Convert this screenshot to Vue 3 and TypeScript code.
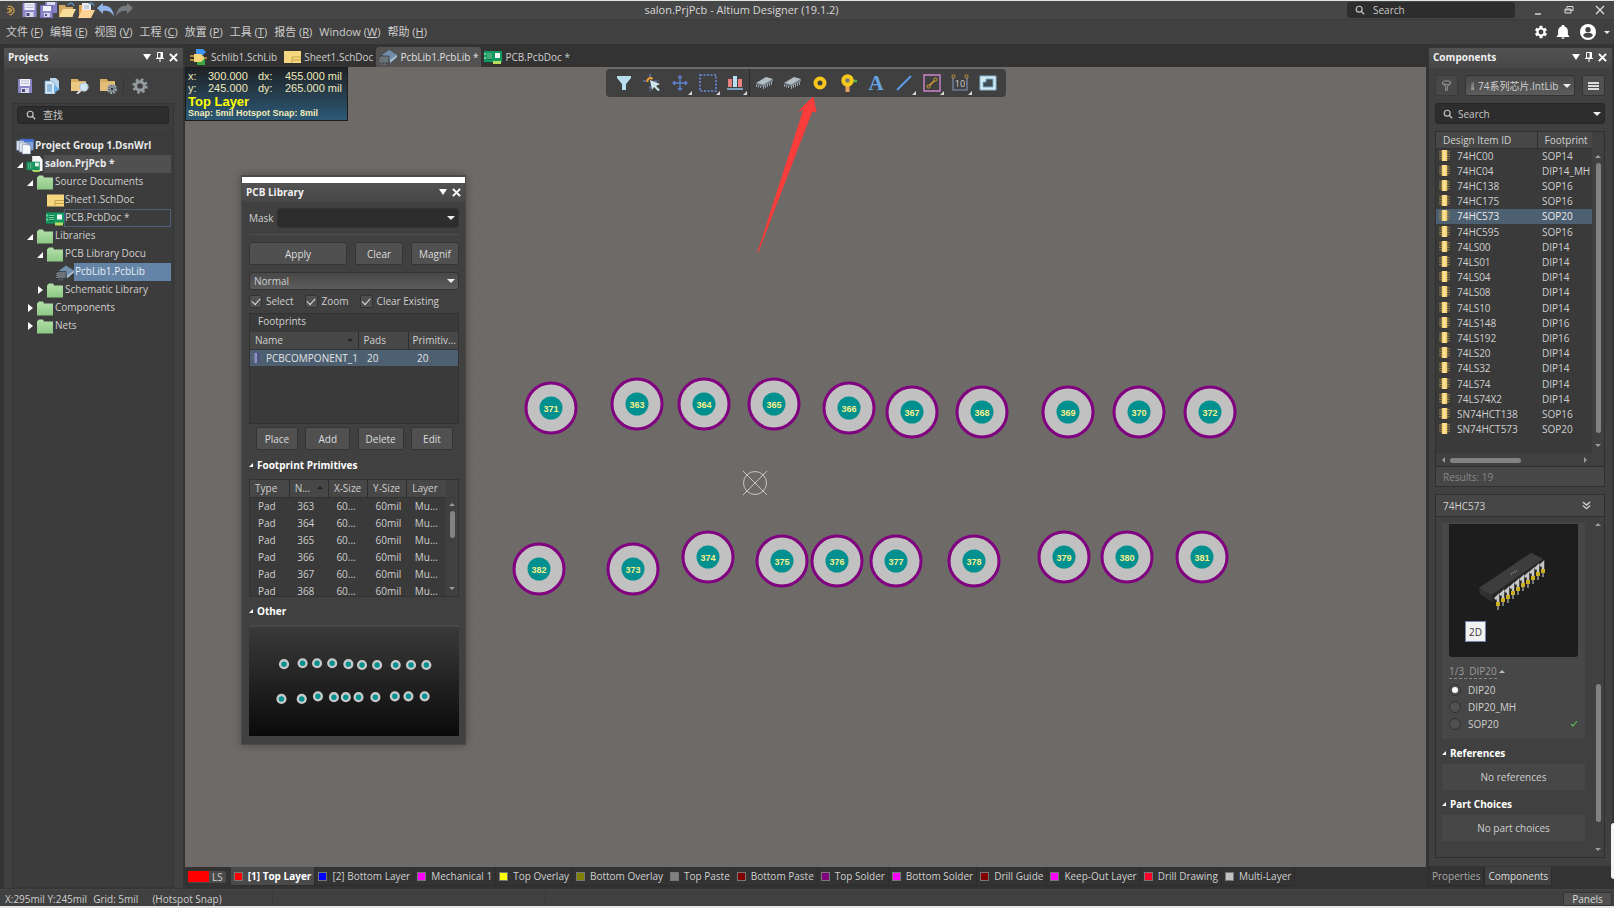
<script setup lang="ts">
import { ref } from 'vue'

interface Pad { id: number; x: number; y: number }
interface TreeNode { label: string; level: number; icon: string; arrow?: 'open' | 'closed'; state?: string }
interface Layer { name: string; color: string }
interface Part { id: string; footprint: string }

const menus: [string, string][] = [
  ['文件', 'F'], ['编辑', 'E'], ['视图', 'V'], ['工程', 'C'], ['放置', 'P'],
  ['工具', 'T'], ['报告', 'R'], ['Window', 'W'], ['帮助', 'H'],
]

const quickIcons = ['save', 'save-all', 'open', 'open-doc', 'undo', 'redo']

const tree: TreeNode[] = [
  { label: 'Project Group 1.DsnWrl', level: 0, icon: 'group', state: 'strong' },
  { label: 'salon.PrjPcb *', level: 1, icon: 'project', arrow: 'open', state: 'strong current' },
  { label: 'Source Documents', level: 2, icon: 'folder', arrow: 'open' },
  { label: 'Sheet1.SchDoc', level: 3, icon: 'sheet' },
  { label: 'PCB.PcbDoc *', level: 3, icon: 'pcb', state: 'outlined' },
  { label: 'Libraries', level: 2, icon: 'folder', arrow: 'open' },
  { label: 'PCB Library Docu', level: 3, icon: 'folder', arrow: 'open' },
  { label: 'PcbLib1.PcbLib', level: 4, icon: 'pcblib', state: 'selected' },
  { label: 'Schematic Library', level: 3, icon: 'folder', arrow: 'closed' },
  { label: 'Components', level: 2, icon: 'folder', arrow: 'closed' },
  { label: 'Nets', level: 2, icon: 'folder', arrow: 'closed' },
]

const docs = [
  { name: 'Schlib1.SchLib', icon: 'schlib' },
  { name: 'Sheet1.SchDoc', icon: 'sheet' },
  { name: 'PcbLib1.PcbLib *', icon: 'pcblib', active: true },
  { name: 'PCB.PcbDoc *', icon: 'pcb' },
]

const tools = [
  { icon: 'funnel', more: false }, { icon: 'snap', more: false }, { icon: 'move', more: true },
  { icon: 'marquee', more: true }, { icon: 'align', more: true }, { icon: 'chip', more: false },
  { icon: 'chip', more: false }, { icon: 'pad', more: false }, { icon: 'via', more: false },
  { icon: 'letter', more: false }, { icon: 'line', more: true }, { icon: 'region', more: true },
  { icon: 'dimension', more: true }, { icon: 'board', more: false },
]

const pads: Pad[] = [
  { id: 371, x: 551, y: 408 }, { id: 363, x: 637, y: 404 }, { id: 364, x: 704, y: 404 },
  { id: 365, x: 774, y: 404 }, { id: 366, x: 849, y: 408 }, { id: 367, x: 912, y: 412 },
  { id: 368, x: 982, y: 412 }, { id: 369, x: 1068, y: 412 }, { id: 370, x: 1139, y: 412 },
  { id: 372, x: 1210, y: 412 }, { id: 382, x: 539, y: 569 }, { id: 373, x: 633, y: 569 },
  { id: 374, x: 708, y: 557 }, { id: 375, x: 782, y: 561 }, { id: 376, x: 837, y: 561 },
  { id: 377, x: 896, y: 561 }, { id: 378, x: 974, y: 561 }, { id: 379, x: 1064, y: 557 },
  { id: 380, x: 1127, y: 557 }, { id: 381, x: 1202, y: 557 },
]

const primitives = [363, 364, 365, 366, 367, 368]

const parts: Part[] = [
  ['74HC00', 'SOP14'], ['74HC04', 'DIP14_MH'], ['74HC138', 'SOP16'], ['74HC175', 'SOP16'],
  ['74HC573', 'SOP20'], ['74HC595', 'SOP16'], ['74LS00', 'DIP14'], ['74LS01', 'DIP14'],
  ['74LS04', 'DIP14'], ['74LS08', 'DIP14'], ['74LS10', 'DIP14'], ['74LS148', 'DIP16'],
  ['74LS192', 'DIP16'], ['74LS20', 'DIP14'], ['74LS32', 'DIP14'], ['74LS74', 'DIP14'],
  ['74LS74X2', 'DIP14'], ['SN74HCT138', 'SOP16'], ['SN74HCT573', 'SOP20'],
].map(([id, footprint]) => ({ id, footprint }))

const layers: Layer[] = [
  { name: '[1] Top Layer', color: '#ff0000' }, { name: '[2] Bottom Layer', color: '#0000ff' },
  { name: 'Mechanical 1', color: '#ff00ff' }, { name: 'Top Overlay', color: '#ffff00' },
  { name: 'Bottom Overlay', color: '#808000' }, { name: 'Top Paste', color: '#808080' },
  { name: 'Bottom Paste', color: '#800000' }, { name: 'Top Solder', color: '#800080' },
  { name: 'Bottom Solder', color: '#ff00ff' }, { name: 'Drill Guide', color: '#800000' },
  { name: 'Keep-Out Layer', color: '#ff00ff' }, { name: 'Drill Drawing', color: '#ff0028' },
  { name: 'Multi-Layer', color: '#c0c0c0' },
]

const models = ['DIP20', 'DIP20_MH', 'SOP20']
const selectedPart = ref('74HC573')
const model = ref('DIP20')
const activeLayer = ref('[1] Top Layer')
const mask = ref('')
const checks = ref([
  { label: 'Select', on: true }, { label: 'Zoom', on: true }, { label: 'Clear Existing', on: true },
])
const pins = Array.from({ length: 10 }, (_, i) => ({ x: 49 + i * 5, y: 76 - Math.round(i * 3.7) }))
</script>

<template>
  <div class="app">
    <svg class="defs" aria-hidden="true">
      <defs>
        <linearGradient id="g-folder" x1="0" y1="0" x2="0" y2="1"><stop offset="0" stop-color="#b5e0ab" /><stop offset="1" stop-color="#8cc884" /></linearGradient>
        <linearGradient id="g-chip" x1="0" y1="0" x2="1" y2="0"><stop offset="0" stop-color="#f0c860" /><stop offset=".5" stop-color="#ffe6a0" /><stop offset="1" stop-color="#eec25a" /></linearGradient>
        <symbol id="i-logo" viewBox="0 0 16 16"><path d="M4 2h5l4 4v4l-4 4H6M3 6l4-1 3 2-2 3-5 1M7 5v5" fill="none" stroke="#c69c4c" stroke-width="1.800" /></symbol>
        <symbol id="i-save" viewBox="0 0 16 16"><path d="M1 1h14v14H1z" fill="#8a86c8" /><path d="M3 1h10v7H3z" fill="#f2f2fa" /><path d="M4 3h8M4 5.500h8" stroke="#b8b8d0" /><path d="M4 10h8v5H4z" fill="#d8d8ea" /><path d="M5 11h3v3H5z" fill="#4b4880" /></symbol>
        <symbol id="i-save-all" viewBox="0 0 17 16"><path d="M5 0h12v11H5z" fill="#8480c4" /><path d="M7 0h8v3H7z" fill="#dcdcf0" /><path d="M0 3h13v13H0z" fill="#716cb4" /><path d="M1 4h11v11H1z" fill="#8a86c8" /><path d="M3 4h8v5H3z" fill="#f2f2fa" /><path d="M4 11h6v4H4z" fill="#d8d8ea" /><path d="M5 12h2v2H5z" fill="#4b4880" /></symbol>
        <symbol id="i-open" viewBox="0 0 17 16"><path d="M0 3h6l1 2h7v10H0z" fill="#d3ab62" /><path d="M4 7h13l-4 8H0z" fill="#f8dc9a" /><path d="M9 3c2-3 5-2 6 1" fill="none" stroke="#5b8fb0" stroke-width="1.500" /></symbol>
        <symbol id="i-open-doc" viewBox="0 0 17 16"><path d="M1 3h3v12H1z" fill="#e2a752" /><path d="M4 1h9v11H4z" fill="#e8ecf2" /><path d="M6 4h5M6 6h5" stroke="#a7b2c0" /><path d="M4 8h13l-4 8H0z" fill="#fbd294" /><path d="M11 2c2-2 4-1 5 2" fill="none" stroke="#5b8fb0" stroke-width="1.500" /></symbol>
        <symbol id="i-undo" viewBox="0 0 17 16"><path d="M0 6l6-5v3c6-1 10 3 11 10-3-5-7-6-11-5v3z" fill="#8fb4ea" /></symbol>
        <symbol id="i-redo" viewBox="0 0 17 16"><path d="M17 6l-6-5v3C5 3 1 7 0 14c3-5 7-6 11-5v3z" fill="#777c80" /></symbol>
        <symbol id="i-copy" viewBox="0 0 16 16"><path d="M6 0h6l3 3v9H6z" fill="#b9d5ea" /><path d="M1 3h7l3 3v10H1z" fill="#d9eaf6" stroke="#6e9cc0" stroke-width=".7" /><path d="M3 7h5M3 9h5M3 11h5M3 13h5" stroke="#4d8fc7" /><path d="M10 7l6 4-6 4z" fill="#6db1ea" /></symbol>
        <symbol id="i-find-folder" viewBox="0 0 18 16"><path d="M0 1h7l1 2h7v10H0z" fill="#d9ad62" /><path d="M0 4h15v9H0z" fill="#edc882" /><circle cx="13" cy="9" r="4.200" fill="#cfe7f5" stroke="#a9bccb" /><path d="M10 12l-4 4" stroke="#ddd" stroke-width="2" /></symbol>
        <symbol id="i-gear-folder" viewBox="0 0 18 16"><path d="M0 1h7l1 2h7v10H0z" fill="#d9ad62" /><path d="M0 4h15v9H0z" fill="#e3bd7a" /><circle cx="12" cy="11" r="4" fill="#444" stroke="#9aa5ad" stroke-width="2" stroke-dasharray="2 1" /><circle cx="12" cy="11" r="3" fill="#8a959c" /><circle cx="12" cy="11" r="1.300" fill="#333" /></symbol>
        <symbol id="i-gear" viewBox="0 0 16 16"><circle cx="8" cy="8" r="6.500" fill="none" stroke="currentColor" stroke-width="2.400" stroke-dasharray="2.600 2.500" /><circle cx="8" cy="8" r="4.300" fill="none" stroke="currentColor" stroke-width="3" /></symbol>
        <symbol id="i-cog" viewBox="3 2 20 20"><path d="M19.400 13a7 7 0 0 0 0-2l2.100-1.600-2-3.500-2.500 1a7 7 0 0 0-1.700-1L15 3.200h-4l-.4 2.700a7 7 0 0 0-1.700 1l-2.500-1-2 3.500L6.500 11a7 7 0 0 0 0 2l-2.100 1.600 2 3.500 2.500-1a7 7 0 0 0 1.700 1l.4 2.700h4l.4-2.700a7 7 0 0 0 1.700-1l2.500 1 2-3.500zM13 15.500a3.500 3.500 0 1 1 0-7 3.500 3.500 0 0 1 0 7z" fill="#fff" /></symbol>
        <symbol id="i-bell" viewBox="2 2 20 20"><path d="M12 22a2.500 2.500 0 0 0 2.500-2h-5A2.500 2.500 0 0 0 12 22zm7-6v-5c0-3.500-2-6-5-6.700V3.500a2 2 0 0 0-4 0v.8C7 5 5 7.500 5 11v5l-2 2v1h18v-1z" fill="#fff" /></symbol>
        <symbol id="i-user" viewBox="0 0 24 24"><circle cx="12" cy="12" r="12" fill="#fff" /><circle cx="12" cy="8.500" r="4" fill="#444" /><path d="M4.500 17c2-5 13-5 15 0-3 5-12 5-15 0z" fill="#444" /></symbol>
        <symbol id="i-search" viewBox="0 0 12 12"><circle cx="5" cy="5" r="3.500" fill="none" stroke="#c4c4c4" stroke-width="1.400" /><path d="M7.500 7.500l3.500 3.500" stroke="#c4c4c4" stroke-width="1.600" /></symbol>
        <symbol id="i-down" viewBox="0 0 8 8"><path d="M0 1h8L4 7z" fill="currentColor" /></symbol>
        <symbol id="i-pin" viewBox="0 0 8 10"><path d="M1.500.5h5V6h-5zM0 6.500h8M4 6.500V10" fill="none" stroke="#fff" /><path d="M4.500.5h2V6h-2z" fill="#fff" /></symbol>
        <symbol id="i-close" viewBox="0 0 10 10"><path d="M1 1l8 8M9 1L1 9" stroke="currentColor" stroke-width="2.200" /></symbol>
        <symbol id="i-thin-close" viewBox="0 0 10 10"><path d="M1 1l8 8M9 1L1 9" stroke="#ddd" stroke-width="1.300" /></symbol>
        <symbol id="i-restore" viewBox="0 0 10 10"><path d="M3 3V1.500h6v4H7M1 4h6v4H1zM1 5h6" fill="none" stroke="#ddd" /></symbol>
        <symbol id="i-minimize" viewBox="0 0 10 10"><path d="M2 9h6" stroke="#ddd" stroke-width="1.400" /></symbol>
        <symbol id="i-group" viewBox="0 0 18 18"><path d="M4 1h14v12H4z" fill="#7f9fd8" /><path d="M4 1h14v3H4z" fill="#3f6cd2" /><path d="M0 3h8v10H0z" fill="#d7e0ee" stroke="#6b7d9c" stroke-width=".6" /><path d="M3 5h8v10H3z" fill="#e3eaf4" stroke="#6b7d9c" stroke-width=".6" /><path d="M6 7h7l2 2v8H6z" fill="#f4f7fb" stroke="#6b7d9c" stroke-width=".6" /></symbol>
        <symbol id="i-project" viewBox="0 0 18 18"><path d="M6 0h8l3 4v12H6z" fill="#f4f6f8" /><path d="M0 6h14v9H0z" fill="#16935c" /><path d="M2 8h4v5H2z" fill="#7fdca8" /><path d="M3 8v5M5 8v5" stroke="#0d6e42" /><path d="M9 7h4v4H9z" fill="#e6f2ec" /><path d="M7 15h7v2H7z" fill="#a8d452" /></symbol>
        <symbol id="i-pcb" viewBox="0 0 18 16"><path d="M0 2h18v11H0z" fill="#129a62" /><path d="M3 4h5v7H3z" fill="#0c7548" /><path d="M3 5h5M3 7h5M3 9h5" stroke="#7fdca8" /><path d="M0 4h2v2H0zM0 8h2v2H0z" fill="#6cd29c" /><path d="M11 4h5v5h-5z" fill="#f0f4f2" /><path d="M9 12h8v3H9z" fill="#b8dc60" /></symbol>
        <symbol id="i-folder" viewBox="0 0 18 16"><path d="M1 3l2-2h4l1 2h9v12H1z" fill="url(#g-folder)" /></symbol>
        <symbol id="i-sheet" viewBox="0 0 18 16"><path d="M1 2h17v12H1z" fill="#f4d77e" /><path d="M9 8h9M9 11h9M9 8v6" stroke="#c39d47" stroke-width=".9" /></symbol>
        <symbol id="i-pcblib" viewBox="0 0 18 16"><path d="M3 6l7-5 8 5-7 6z" fill="#718fab" /><path d="M18 6v2l-7 6v-3z" fill="#a9bfd2" /><path d="M3 6l8 5v2L3 9z" fill="#4f6a82" /><path d="M1 7h9v7H1z" fill="#6a727a" stroke="#252a2e" stroke-width=".6" /><path d="M0 9h2M0 11h2M0 13h2M3 14v2M6 14v2" stroke="#7a8188" /></symbol>
        <symbol id="i-schlib" viewBox="0 0 18 16"><path d="M6 0h7l3 3-3 3H6z" fill="#3f93f2" /><path d="M7 10h8v6H7z" fill="#3aa945" /><path d="M4 5h7l4 4-4 4H4z" fill="#f5d777" /><path d="M0 7h4M0 11h4M15 9h2" stroke="#d9a735" stroke-width="1.500" /></symbol>
        <symbol id="i-funnel" viewBox="0 0 18 18"><path d="M2 2h14v2l-5 6v6H7v-6L2 4z" fill="#b9dfec" /></symbol>
        <symbol id="i-snap" viewBox="0 0 18 18"><path d="M7 0v5M7 12v5M0 7h4M11 7h5" stroke="#6f84cf" stroke-width="1.200" stroke-dasharray="3 1" /><path d="M4.500 8a3 3 0 0 1 5-3" fill="none" stroke="#efa52c" stroke-width="2" /><path d="M7 6l10 4-4 2 4 4-2 1-4-4-2 3z" fill="#cfe8f0" /></symbol>
        <symbol id="i-move" viewBox="0 0 18 18"><path d="M9 2v14M2 9h14M7 4l2-2 2 2M7 14l2 2 2-2M4 7L2 9l2 2M14 7l2 2-2 2" fill="none" stroke="#5f82cf" stroke-width="1.300" /></symbol>
        <symbol id="i-marquee" viewBox="0 0 18 18"><path d="M1 1h16v16H1z" fill="none" stroke="#6b8ae0" stroke-width="1.600" stroke-dasharray="2 1.500" /></symbol>
        <symbol id="i-align" viewBox="0 0 18 18"><path d="M2 5h4v8H2zM12 5h4v8h-4z" fill="#ea8080" /><path d="M7 2h4v11H7z" fill="#b9dff2" /><path d="M1 15h16" stroke="#8ec4ea" stroke-width="1.500" /></symbol>
        <symbol id="i-chip" viewBox="0 0 18 18"><path d="M1 9l10-6 7 2-10 6z" fill="#b4bec5" /><path d="M8 11l10-6v2L8 13z" fill="#7b868e" /><path d="M1 9l7 2v2l-7-2z" fill="#66727b" /><path d="M1.500 11v2M3.500 11.500v2M5.500 12v2M8.500 12v3M10.500 11v3M12.500 10v3M14.500 9v3M16.500 8v3" stroke="#b4bdc3" stroke-width=".8" /></symbol>
        <symbol id="i-pad" viewBox="0 0 18 18"><circle cx="9" cy="9" r="4.500" fill="none" stroke="#f6c81c" stroke-width="4" /></symbol>
        <symbol id="i-via" viewBox="0 0 18 18"><path d="M11 7h7" stroke="#51b54c" stroke-width="2.500" /><path d="M8.500 11v7" stroke="#e8a35e" stroke-width="4" /><circle cx="8.500" cy="6.500" r="4.200" fill="#777" stroke="#f6c81c" stroke-width="4" /></symbol>
        <symbol id="i-letter" viewBox="0 0 18 18"><text x="9" y="16" text-anchor="middle" font-family="Liberation Serif, serif" font-size="21" font-weight="700" fill="#68a4e4">A</text></symbol>
        <symbol id="i-line" viewBox="0 0 18 18"><path d="M2 16L16 2" stroke="#5b9ae6" stroke-width="2" /></symbol>
        <symbol id="i-region" viewBox="0 0 18 18"><path d="M1 1h16v16H1z" fill="none" stroke="#cc83cc" stroke-width="1.400" /><path d="M5 13l8-8" stroke="#d49a33" stroke-width="1.600" /><circle cx="5.500" cy="12.500" r="1.600" fill="#444" stroke="#d49a33" /><circle cx="12.500" cy="5.500" r="1.600" fill="#444" stroke="#d49a33" /></symbol>
        <symbol id="i-dimension" viewBox="0 0 18 18"><path d="M2 4v12h14V4" fill="none" stroke="#7a8fb8" stroke-width="1.200" /><circle cx="2.500" cy="2.500" r="1.600" fill="none" stroke="#d49a33" /><circle cx="15.500" cy="2.500" r="1.600" fill="none" stroke="#d49a33" /><text x="9" y="13" text-anchor="middle" font-family="Open Sans, sans-serif" font-size="9" fill="#d0d0d0">10</text></symbol>
        <symbol id="i-board" viewBox="0 0 18 18"><path d="M1 2h16v14H1z" fill="#d4ecf4" stroke="#86b4d0" /><path d="M4 13V8h3V5h7v8z" fill="#3f4a52" stroke="#7ba6c2" /></symbol>
        <symbol id="i-part" viewBox="0 0 12 12"><path d="M0 2h12M0 4.500h12M0 7h12M0 9.500h12" stroke="#9b834b" /><path d="M3 0h6v12H3z" fill="url(#g-chip)" /></symbol>
        <symbol id="i-foot" viewBox="0 0 12 12"><path d="M0 2h12M0 5h12M0 8h12" stroke="#6d7076" /><path d="M2 0h8v12H2z" fill="#4b527c" /><path d="M3 0h3v12H3z" fill="#8a93c4" /></symbol>
        <symbol id="i-funnel-line" viewBox="0 0 12 12"><ellipse cx="6" cy="3" rx="4.500" ry="2" fill="none" stroke="#8b8b8b" stroke-width="1.200" /><path d="M1.500 3.500L5 7v4h2V7l3.500-3.500" fill="none" stroke="#8b8b8b" stroke-width="1.200" /></symbol>
        <symbol id="i-chevrons" viewBox="0 0 10 10"><path d="M1 1l4 3.500L9 1M1 5l4 3.500L9 5" fill="none" stroke="#d0d0d0" stroke-width="1.500" /></symbol>
      </defs>
    </svg>

    <header class="titlebar">
      <div class="quick">
        <svg class="logo"><use href="#i-logo" /></svg>
        <button v-for="q in quickIcons" :key="q" type="button" :aria-label="q"><svg><use :href="'#i-' + q" /></svg></button>
      </div>
      <h1>salon.PrjPcb - Altium Designer (19.1.2)</h1>
      <div class="window-tools">
        <label class="field top-search"><svg><use href="#i-search" /></svg><input type="text" placeholder="Search" aria-label="Search"></label>
        <button type="button" aria-label="Minimize"><svg><use href="#i-minimize" /></svg></button>
        <button type="button" aria-label="Restore"><svg><use href="#i-restore" /></svg></button>
        <button type="button" aria-label="Close"><svg><use href="#i-thin-close" /></svg></button>
      </div>
    </header>
    <nav class="menubar">
      <button v-for="[name, key] in menus" :key="key" type="button">{{ name }} (<u>{{ key }}</u>)</button>
      <div class="account">
        <button type="button" aria-label="Settings"><svg><use href="#i-cog" /></svg></button>
        <button type="button" aria-label="Notifications"><svg><use href="#i-bell" /></svg></button>
        <button type="button" aria-label="Account" class="user"><svg><use href="#i-user" /></svg><i class="caret" /></button>
      </div>
    </nav>

    <main class="workspace">
      <aside class="dock projects">
        <div class="dock-head">
          <h2>Projects</h2>
          <button type="button" aria-label="Menu"><svg class="s8"><use href="#i-down" /></svg></button>
          <button type="button" aria-label="Pin"><svg class="pin"><use href="#i-pin" /></svg></button>
          <button type="button" aria-label="Close"><svg class="s9"><use href="#i-close" /></svg></button>
        </div>
        <div class="project-tools">
          <button type="button" aria-label="Save"><svg><use href="#i-save" /></svg></button>
          <button type="button" aria-label="Compile"><svg><use href="#i-copy" /></svg></button>
          <button type="button" aria-label="Explore"><svg class="wide"><use href="#i-find-folder" /></svg></button>
          <button type="button" aria-label="Project options"><svg class="wide"><use href="#i-gear-folder" /></svg></button>
          <button type="button" aria-label="Preferences" class="prefs"><svg><use href="#i-gear" /></svg></button>
        </div>
        <div class="tree-box">
          <label class="field find"><svg><use href="#i-search" /></svg><input type="text" placeholder="查找" aria-label="查找"></label>
          <ul class="tree">
            <li v-for="n in tree" :key="n.label" :style="{ paddingLeft: Math.max(0, n.level - 1) * 10 + 'px' }" :class="n.state">
              <i v-if="n.level" class="twist" :class="n.arrow" />
              <svg><use :href="'#i-' + n.icon" /></svg>
              <span class="node">{{ n.label }}</span>
            </li>
          </ul>
        </div>
      </aside>

      <section class="editor">
        <div class="doc-tabs">
          <button v-for="d in docs" :key="d.name" type="button" :class="{ active: d.active }"><svg><use :href="'#i-' + d.icon" /></svg>{{ d.name }}</button>
        </div>
        <div class="canvas">
          <svg class="drawing">
            <g transform="translate(-185 -67)">
              <g v-for="p in pads" :key="p.id">
                <circle :cx="p.x" :cy="p.y" r="25" fill="#c1c1c1" stroke="#800080" stroke-width="3" />
                <circle :cx="p.x" :cy="p.y" r="11.500" fill="#009090" />
                <text :x="p.x" :y="p.y + 4" class="pad-no">{{ p.id }}</text>
              </g>
              <g fill="none" stroke="#c4c4c4"><circle cx="755" cy="483" r="11.500" /><path d="M743 471l24 24M767 471l-24 24" /></g>
              <path d="M813 97l3 15-4-1-54 141 46-143-5 2z" fill="#fa3c3a" stroke="#fa3c3a" />
            </g>
          </svg>

          <div class="hud">
            <table>
              <tbody>
                <tr><td>x:</td><td>300.000</td><td>dx:</td><td>455.000 mil</td></tr>
                <tr><td>y:</td><td>245.000</td><td>dy:</td><td>265.000 mil</td></tr>
              </tbody>
            </table>
            <strong>Top Layer</strong>
            <small>Snap: 5mil Hotspot Snap: 8mil</small>
          </div>

          <div class="toolbar" role="toolbar">
            <button v-for="(t, i) in tools" :key="i" type="button" :aria-label="t.icon" :class="{ more: t.more, divided: i === 4 }"><svg><use :href="'#i-' + t.icon" /></svg></button>
          </div>

          <section class="library">
            <div class="grip" />
            <div class="dock-head">
              <h2>PCB Library</h2>
              <button type="button" aria-label="Menu"><svg class="s8"><use href="#i-down" /></svg></button>
              <button type="button" aria-label="Close"><svg class="s9"><use href="#i-close" /></svg></button>
            </div>
            <div class="lib-body">
              <div class="mask">
                <label for="mask">Mask</label>
                <span class="combo dark"><input id="mask" v-model="mask" type="text"></span>
              </div>
              <div class="actions">
                <button type="button" class="btn">Apply</button>
                <button type="button" class="btn">Clear</button>
                <button type="button" class="btn">Magnif</button>
              </div>
              <span class="combo mode"><select aria-label="Mode"><option>Normal</option></select></span>
              <div class="checks">
                <label v-for="c in checks" :key="c.label"><input v-model="c.on" type="checkbox">{{ c.label }}</label>
              </div>
              <div class="foot-box">
                <h3>Footprints</h3>
                <table class="foot">
                  <thead><tr><th class="sorted">Name</th><th>Pads</th><th>Primitiv...</th></tr></thead>
                  <tbody><tr><td><svg><use href="#i-foot" /></svg>PCBCOMPONENT_1</td><td>20</td><td>20</td></tr></tbody>
                </table>
              </div>
              <div class="foot-actions">
                <button type="button" class="btn">Place</button>
                <button type="button" class="btn">Add</button>
                <button type="button" class="btn">Delete</button>
                <button type="button" class="btn">Edit</button>
              </div>
              <h4><i class="twist open" />Footprint Primitives</h4>
              <div class="prim-box">
                <table class="prims">
                  <thead><tr><th>Type</th><th class="sorted">N...</th><th>X-Size</th><th>Y-Size</th><th>Layer</th></tr></thead>
                  <tbody><tr v-for="n in primitives" :key="n"><td>Pad</td><td>{{ n }}</td><td>60...</td><td>60mil</td><td>Mu...</td></tr></tbody>
                </table>
                <div class="vbar"><i class="up" /><b class="short" /><i class="down" /></div>
              </div>
              <h4><i class="twist open" />Other</h4>
              <svg class="preview" viewBox="0 0 210 109">
                <g transform="translate(-84 -51) scale(.216)">
                  <g v-for="p in pads" :key="p.id"><circle :cx="p.x" :cy="p.y" r="18" fill="#009090" stroke="#c8c8c8" stroke-width="11" /></g>
                </g>
              </svg>
            </div>
          </section>
        </div>
        <div class="layers">
          <button type="button" class="layer-set"><i />LS</button>
          <div class="layer-tabs">
            <button v-for="l in layers" :key="l.name" type="button" :class="{ active: l.name === activeLayer }" @click="activeLayer = l.name"><i :style="{ background: l.color }" />{{ l.name }}</button>
          </div>
        </div>
      </section>

      <div class="right">
        <aside class="dock components">
          <div class="dock-head">
            <h2>Components</h2>
            <button type="button" aria-label="Menu"><svg class="s8"><use href="#i-down" /></svg></button>
            <button type="button" aria-label="Pin"><svg class="pin"><use href="#i-pin" /></svg></button>
            <button type="button" aria-label="Close"><svg class="s9"><use href="#i-close" /></svg></button>
          </div>
          <div class="comp-body">
            <div class="source">
              <button type="button" class="btn flat" aria-label="Filter"><svg><use href="#i-funnel-line" /></svg></button>
              <span class="combo lib"><select aria-label="Library"><option>74系列芯片.IntLib</option></select></span>
              <button type="button" class="btn lines" aria-label="Options"><i /><i /><i /></button>
            </div>
            <label class="field comp-search combo"><svg><use href="#i-search" /></svg><input type="text" placeholder="Search" aria-label="Search components"></label>
            <div class="part-box">
              <div class="part-scroll">
                <table class="parts">
                  <thead><tr><th>Design Item ID</th><th>Footprint</th></tr></thead>
                  <tbody>
                    <tr v-for="p in parts" :key="p.id" :class="{ selected: p.id === selectedPart }" @click="selectedPart = p.id">
                      <td><svg><use href="#i-part" /></svg>{{ p.id }}</td><td>{{ p.footprint }}</td>
                    </tr>
                  </tbody>
                </table>
                <div class="vbar"><i class="up" /><b class="long" /><i class="down" /></div>
              </div>
              <div class="hbar"><i class="left" /><b /><i class="rightward" /></div>
              <p class="results">Results: 19</p>
            </div>
            <div class="detail">
              <div class="detail-head">{{ selectedPart }}<svg><use href="#i-chevrons" /></svg></div>
              <div class="detail-body">
                <div class="detail-main">
                  <div class="model-card">
                    <div class="model-view">
                      <svg viewBox="0 0 129 133">
                        <path d="M30 64l52-35 12 6v7L43 78l-12-8z" fill="#303030" />
                        <path d="M30 64l52-35 12 6-51 36z" fill="#3d3d3d" />
                        <path d="M43 71l51-36v7L43 78z" fill="#262626" />
                        <path d="M62 50l7-4" stroke="#888" stroke-width="1.500" stroke-dasharray="1 1" />
                        <g v-for="(p, i) in pins" :key="i">
                          <path :d="`M${p.x - 3} ${p.y - 1}l3-3v7`" fill="none" stroke="#c6c6c6" stroke-width="2.500" />
                          <path :d="`M${p.x} ${p.y + 2}v4`" stroke="#c9ae22" stroke-width="4" />
                          <path :d="`M${p.x} ${p.y + 6}v4`" stroke="#9a9a9a" stroke-width="1.500" />
                        </g>
                      </svg>
                      <button type="button">2D</button>
                    </div>
                    <a href="#" class="model-link">1/3&nbsp; DIP20</a>
                    <label v-for="m in models" :key="m" class="model"><input v-model="model" type="radio" name="model" :value="m">{{ m }}<svg v-if="m === 'SOP20'" viewBox="0 0 8 8"><path d="M1 4l2 2 4-5" fill="none" stroke="#5cb85c" stroke-width="1.200" /></svg></label>
                  </div>
                  <h4><i class="twist open" />References</h4>
                  <p class="empty">No references</p>
                  <h4><i class="twist open" />Part Choices</h4>
                  <p class="empty">No part choices</p>
                </div>
                <div class="vbar"><i class="up" /><b class="low" /><i class="down" /></div>
              </div>
            </div>
          </div>
        </aside>
        <div class="dock-tabs">
          <button type="button">Properties</button>
          <button type="button" class="active">Components</button>
        </div>
      </div>
      <i class="edge-handle" />
    </main>

    <footer class="status">
      <span>X:295mil Y:245mil</span><span>Grid: 5mil</span><span class="snap">(Hotspot Snap)</span>
      <span class="cell" />
      <button type="button" class="btn">Panels</button>
    </footer>
  </div>
</template>

<style>
html, body, #app { height: 100%; }
body { margin: 0; background: #e4e8e6; }
</style>

<style scoped>
* { box-sizing: border-box; }
.app {
  display: flex; flex-direction: column; height: 100vh; min-height: 880px;
  border-top: 1px solid #dfe5e2; border-bottom: 2px solid #e6e6e6;
  background: #333; color: #cfcfcf;
  font: 10px/14px "Open Sans", "Noto Sans CJK SC", sans-serif;
}
.defs { position: absolute; width: 0; height: 0; }
button, input, select { font: inherit; color: inherit; margin: 0; padding: 0; border: 0; background: none; }
input { outline: 0; min-width: 0; }
h1, h2, h3, h4, p, ul { margin: 0; padding: 0; font-size: inherit; font-weight: 400; }
svg { display: block; flex: none; }
table { border-collapse: collapse; table-layout: fixed; }
td, th { padding: 0; text-align: left; font-weight: 400; white-space: nowrap; overflow: hidden; }

.titlebar { flex: none; display: grid; grid-template-columns: 1fr auto 1fr; align-items: center; height: 19px; background: #464646; padding-left: 5px; border-bottom: 1px solid #3a3a3a; }
.titlebar h1 { font-size: 11px; color: #d6d6d6; margin-right: 136px; }
.quick { display: flex; align-items: center; }
.quick svg { width: 17px; height: 16px; }
.quick .logo { width: 11px; height: 15px; margin-right: 5px; }
.quick button { margin-right: 2px; }
.window-tools { display: flex; justify-content: flex-end; align-items: center; padding-right: 9px; gap: 21px; }
.window-tools button svg { width: 10px; height: 10px; }
.field { display: flex; align-items: center; background: #2d2d2d; border-radius: 3px; }
.field svg { width: 10px; height: 10px; margin: 0 8px; }
.field input { flex: 1; }
.field input::placeholder { color: #c8c8c8; opacity: 1; }
.top-search { width: 168px; height: 16px; margin-right: -3px; }

.menubar { flex: none; display: flex; align-items: center; height: 24px; padding: 0 4px 0 6px; gap: 7px; background: #404040; font-size: 11px; }
.account { margin-left: auto; display: flex; align-items: center; gap: 8px; }
.account svg { width: 14px; height: 14px; }
.account .user { display: flex; align-items: center; gap: 8px; margin-left: 2px; }
.account .user svg { width: 16px; height: 16px; }
.caret { border: 3px solid transparent; border-top: 3px solid #eee; border-bottom: 0; }

.workspace { position: relative; flex: 1; min-height: 0; display: flex; }
.dock { background: #404040; border: 1px solid #353535; display: flex; flex-direction: column; }
.dock-head { flex: none; display: flex; align-items: center; gap: 5px; height: 20px; padding: 0 5px 2px 4px; background: linear-gradient(#525252, #474747); color: #fff; }
.dock-head h2 { flex: 1; font-weight: 700; color: #f0f0f0; }
.s8 { width: 8px; height: 8px; }
.s9 { width: 9px; height: 9px; }
.pin { width: 8px; height: 10px; }
.projects { width: 181px; margin: 3px 1px 0 3px; }
.project-tools { display: flex; align-items: center; height: 35px; padding: 1px 0 0 13px; gap: 11px; }
.project-tools svg { width: 16px; height: 16px; }
.project-tools .wide { width: 18px; }
.project-tools .prefs { color: #949ca0; border-left: 1px solid #353535; padding-left: 8px; margin-left: -6px; }
.tree-box { flex: 1; margin: 0 9px 0 8px; border: 1px solid #353535; background: #3c3c3c; }
.find { height: 18px; margin: 2px 4px 10px; border: 1px solid #262626; }
.find svg { margin-right: 7px; }
.tree { list-style: none; border-top: 1px solid #363636; padding: 2px 2px 0 3px; }
.tree li { display: flex; height: 18px; align-items: center; }
.tree svg { width: 18px; height: 17px; }
.twist { flex: none; width: 8px; height: 10px; position: relative; margin-right: 2px; font-style: normal; }
.twist.open::before { content: ""; position: absolute; left: 1px; top: 3px; border-left: 6px solid transparent; border-bottom: 6px solid #fff; }
.twist.closed::before { content: ""; position: absolute; left: 2px; top: 1px; border: 4px solid transparent; border-left: 5px solid #fff; border-right: 0; }
.node { flex: 1; min-width: 0; height: 18px; line-height: 15px; padding-left: 1px; border: 1px solid transparent; border-left: 0; white-space: nowrap; }
.strong { font-weight: 700; color: #e8e8e8; }
.current .node { background: #505050; }
.outlined .node { border: 1px solid #4b6076; padding-left: 0; }
.selected .node { background: #6384a6; color: #e8eef4; }

.editor { flex: 1; min-width: 0; display: flex; flex-direction: column; }
.doc-tabs { flex: none; display: flex; align-items: flex-end; height: 23px; padding-left: 2px; }
.doc-tabs button { display: flex; align-items: center; gap: 3px; height: 20px; padding: 0 3px 1px; border-radius: 3px 3px 0 0; white-space: nowrap; }
.doc-tabs svg { width: 18px; height: 16px; }
.doc-tabs .active { background: #525252; color: #e0e0e0; }
.canvas { position: relative; flex: 1; min-height: 0; background: #6e6a68 radial-gradient(circle at 10px 10px, #726e6c 1px, transparent 1px) 0 0 / 20px 20px; }
.drawing { position: absolute; inset: 0; width: 100%; height: 100%; }
.pad-no { font: 700 9px "Liberation Sans", Arial, sans-serif; fill: #f4f08c; text-anchor: middle; }
.hud { position: absolute; left: 0; top: 0; width: 163px; height: 54px; padding: 2px 2px 0; border: 1px solid #1c1c1c; background: linear-gradient(#1f2225, #2c5976); color: #efe9ba; font: 700 11px/12px "Liberation Sans", Arial, sans-serif; }
.hud td:nth-child(1) { width: 20px; }
.hud td:nth-child(2) { width: 50px; }
.hud td:nth-child(3) { width: 27px; }
.hud strong { display: block; color: #ffff00; font-size: 13px; line-height: 15px; }
.hud small { display: block; font-size: 9px; line-height: 9px; white-space: nowrap; }
.toolbar { position: absolute; left: 50%; top: 2px; transform: translateX(-50%); display: flex; padding: 0 4px; height: 28px; background: #404040; border-radius: 4px; }
.toolbar button { position: relative; width: 28px; display: grid; place-items: center; }
.toolbar svg { width: 18px; height: 18px; }
.toolbar .divided { border-right: 1px solid #2c2c2c; }
.toolbar .more::after { content: ""; position: absolute; right: 2px; bottom: 2px; border-left: 4px solid transparent; border-bottom: 4px solid #d8d8d8; }

.library { position: absolute; left: 56px; top: 108px; width: 225px; padding: 0 0 8px; background: #404040; border: 1px solid #4a4a4a; border-top: 2px solid #4a4a4a; box-shadow: 0 0 8px rgba(0, 0, 0, .3); }
.grip { height: 6px; background: #fff; }
.library .dock-head { padding: 0 4px 1px 4px; height: 19px; }
.lib-body { padding: 0 6px 0 7px; }
.mask { display: flex; align-items: center; gap: 3px; height: 33px; border-bottom: 1px solid #4c4c4c; }
.combo { position: relative; display: flex; align-items: center; border: 1px solid #333; border-radius: 3px; }
.combo::after { content: ""; position: absolute; right: 3px; top: 50%; margin-top: -2px; border: 4px solid transparent; border-top: 4px solid #eee; border-bottom: 0; pointer-events: none; }
.combo input, .combo select { width: 100%; appearance: none; outline: 0; }
.dark { flex: 1; height: 20px; background: #2d2d2d; }
.btn { background: #505050; border: 1px solid #343434; border-radius: 2px; color: #dcdcdc; text-align: center; }
.actions { display: grid; grid-template-columns: 98px 1fr 1fr; gap: 8px; margin-top: 7px; height: 23px; }
.mode { height: 18px; margin-top: 7px; padding-left: 4px; background: linear-gradient(#484848, #5c5c5c); }
.checks { display: flex; gap: 11px; height: 23px; align-items: center; padding-bottom: 1px; }
.checks label { display: flex; align-items: center; gap: 4px; }
.checks input { appearance: none; width: 13px; height: 13px; border: 1px solid #333; border-radius: 2px; background: #505050; display: grid; place-items: center; }
.checks input:checked::after { content: ""; width: 7px; height: 4px; border: solid #ddd; border-width: 0 0 1px 1px; transform: rotate(-48deg); margin-bottom: 2px; }
.foot-box { height: 111px; border: 1px solid #323232; background: #3a3a3a; }
.foot-box h3 { height: 18px; line-height: 15px; padding-left: 8px; }
.foot, .prims { width: 100%; }
thead th { background: #474747; border-bottom: 1px solid #323232; position: relative; }
th + th { border-left: 1px solid #2e2e2e; }
.sorted::after { content: ""; position: absolute; right: 5px; top: 6px; border: 3px solid transparent; border-bottom: 3px solid #222; border-top: 0; }
.foot th { height: 17px; padding-left: 5px; }
.foot th:nth-child(2) { width: 50px; }
.foot th:nth-child(3) { width: 50px; padding-left: 4px; }
.foot td { height: 17px; background: #4d6072; color: #e2e2e2; padding-left: 9px; }
.foot td:first-child { padding-left: 2px; }
.foot svg { display: inline-block; width: 10px; height: 10px; margin-right: 4px; vertical-align: -1px; }
.foot-actions { display: grid; grid-template-columns: 42px 45px 46px 42px; justify-content: space-between; padding: 0 6px 0 7px; height: 23px; margin: 3px 0 1px; }
h4 { display: flex; align-items: center; color: #fff; font-weight: 700; height: 28px; }
h4 .twist { margin-right: 0; }
h4 .twist.open::before { left: 0; top: 3px; border-left-width: 4px; border-bottom-width: 4px; }
.prim-box { display: flex; height: 118px; border: 1px solid #323232; background: #3a3a3a; overflow: hidden; }
.prims { flex: 1; width: 0; }
.prims th { height: 17px; padding-left: 5px; }
.prims td { height: 17px; line-height: 14px; padding: 0 0 0 8px; }
.vbar { flex: none; display: flex; flex-direction: column; align-items: center; width: 12px; background: #404040; }
.vbar b { width: 5px; border-radius: 3px; background: #828282; }
.vbar .down { margin-top: auto; }
.up, .down { border: 3px solid transparent; }
.up { border-bottom: 3px solid #9a9a9a; border-top: 0; }
.down { border-top: 3px solid #9a9a9a; border-bottom: 0; }
.prim-box .vbar { padding: 23px 0 6px; }
.short { height: 27px; margin-top: 5px; }
.preview { display: block; width: 100%; border-top: 2px solid #484848; background: linear-gradient(#3a3a3a, #0a0a0a); }

.layers { flex: none; display: flex; align-items: center; height: 22px; padding: 0 0 3px 3px; gap: 5px; }
.layer-set { display: flex; align-items: center; background: #4b4b4b; border-radius: 3px; padding-right: 3px; height: 12px; gap: 3px; }
.layer-set i { width: 21px; height: 11px; background: #f00; }
.layer-tabs { display: flex; }
.layer-tabs button { display: flex; align-items: center; gap: 5px; height: 19px; padding: 0 3px; border: 1px solid #2c2c2c; border-top: 0; border-left: 0; white-space: nowrap; }
.layer-tabs i { width: 9px; height: 9px; border: 1px solid #777; }
.layer-tabs .active { background: #4a4a4a; color: #fff; font-weight: 700; }

.right { display: flex; flex-direction: column; width: 188px; padding: 3px 1px 0 2px; }
.components { flex: 1; min-height: 0; }
.comp-body { flex: 1; min-height: 0; display: flex; flex-direction: column; padding: 7px 7px 8px 6px; }
.source { display: flex; gap: 7px; height: 21px; }
.source .btn { width: 23px; display: grid; place-items: center; align-content: center; gap: 1px; }
.source svg { width: 11px; height: 11px; }
.flat { background: #484848; border-color: #3a3a3a; }
.lib { flex: 1; padding-left: 12px; background: linear-gradient(#484848, #5c5c5c); }
.lib::before { content: ""; position: absolute; left: 5px; top: 6px; width: 3px; height: 8px; background: linear-gradient(120deg, #555, #aaa); }
.source .lines i { width: 11px; height: 2px; background: #ddd; }
.comp-search { height: 21px; margin: 7px 0; border-color: #262626; }
.comp-search svg { margin: 0 5px 0 7px; }
.part-box { flex: none; border: 1px solid #303030; background: #3a3a3a; }
.part-scroll { display: flex; }
.parts { flex: 1; width: 0; height: 305px; margin-bottom: 17px; }
.parts th { height: 16px; padding-left: 7px; }
.parts th:first-child { width: 101px; }
.parts td { height: 15px; line-height: 14px; padding-left: 5px; }
.parts td:first-child { padding-left: 3px; }
.parts svg { display: inline-block; width: 11px; height: 11px; margin-right: 7px; vertical-align: -1px; }
.parts .selected td { background: #4d6072; color: #e8e8e8; }
.part-box .vbar { padding: 23px 0 7px; }
.long { height: 270px; margin-top: 5px; }
.hbar { display: flex; align-items: center; height: 12px; padding: 0 17px 0 6px; background: #404040; }
.hbar b { width: 71px; height: 5px; margin-left: 5px; border-radius: 3px; background: #828282; }
.left, .rightward { border: 3px solid transparent; }
.left { border-right: 3px solid #9a9a9a; border-left: 0; }
.rightward { border-left: 3px solid #9a9a9a; border-right: 0; margin-left: auto; }
.results { height: 20px; line-height: 20px; padding-left: 7px; background: #474747; border-top: 1px solid #303030; color: #888; }
.detail { flex: 1; min-height: 0; margin-top: 7px; border: 1px solid #303030; display: flex; flex-direction: column; overflow: hidden; }
.detail-head { flex: none; display: flex; align-items: center; justify-content: space-between; height: 22px; padding: 0 13px 0 7px; background: #464646; border-bottom: 1px solid #303030; }
.detail-head svg { width: 9px; height: 9px; }
.detail-body { flex: 1; display: flex; justify-content: space-between; min-height: 0; }
.detail-body .vbar { padding: 6px 0; background: none; }
.low { height: 138px; margin-top: 158px; }
.detail-main { width: 143px; margin: 6px 0 0 6px; }
.model-card { background: #474747; padding: 1px 7px 0; height: 216px; }
.model-view { position: relative; height: 133px; background: #1d1d1d; border-radius: 0 0 3px 3px; }
.model-view svg { width: 100%; height: 100%; }
.model-view button { position: absolute; left: 16px; bottom: 15px; width: 21px; height: 21px; background: #f2f2f2; border: 1px solid #7386b0; color: #333; }
.model-link { display: inline-block; position: relative; color: #9a9a9a; text-decoration: none; border-bottom: 1px dashed #888; line-height: 13px; margin: 8px 0 2px; }
.model-link::after { content: ""; position: absolute; left: 100%; top: 5px; margin-left: 2px; border: 3px solid transparent; border-bottom: 3px solid #bbb; border-top: 0; }
.model { display: flex; align-items: center; height: 17px; }
.model input { appearance: none; width: 12px; height: 12px; border: 1px solid #303030; border-radius: 50%; background: #505050; margin-right: 7px; display: grid; place-items: center; }
.model input:checked::after { content: ""; width: 6px; height: 6px; border-radius: 50%; background: #fff; }
.model svg { width: 8px; height: 8px; margin-left: auto; }
.detail h4 { height: 25px; padding-top: 2px; }
.empty { height: 26px; line-height: 26px; text-align: center; background: #474747; }
.dock-tabs { flex: none; display: flex; height: 22px; align-items: flex-start; }
.dock-tabs button { height: 19px; padding: 0 3px; border: 1px solid #2b2b2b; border-top: 0; color: #a8a8a8; }
.dock-tabs .active { background: #404040; color: #ddd; }
.edge-handle { position: absolute; right: 0; bottom: 10px; width: 3px; height: 56px; background: #f4f4f4; border-radius: 3px 0 0 3px; }

.status { flex: none; display: flex; align-items: center; height: 17px; padding: 1px 2px 0 5px; gap: 6px; background: #404040; border-top: 1px solid #484848; }
.snap { margin-left: 8px; }
.cell { width: 274px; height: 15px; margin-left: 44px; border: solid #383838; border-width: 0 1px; }
.status .btn { margin-left: auto; width: 49px; height: 14px; line-height: 12px; }
</style>
